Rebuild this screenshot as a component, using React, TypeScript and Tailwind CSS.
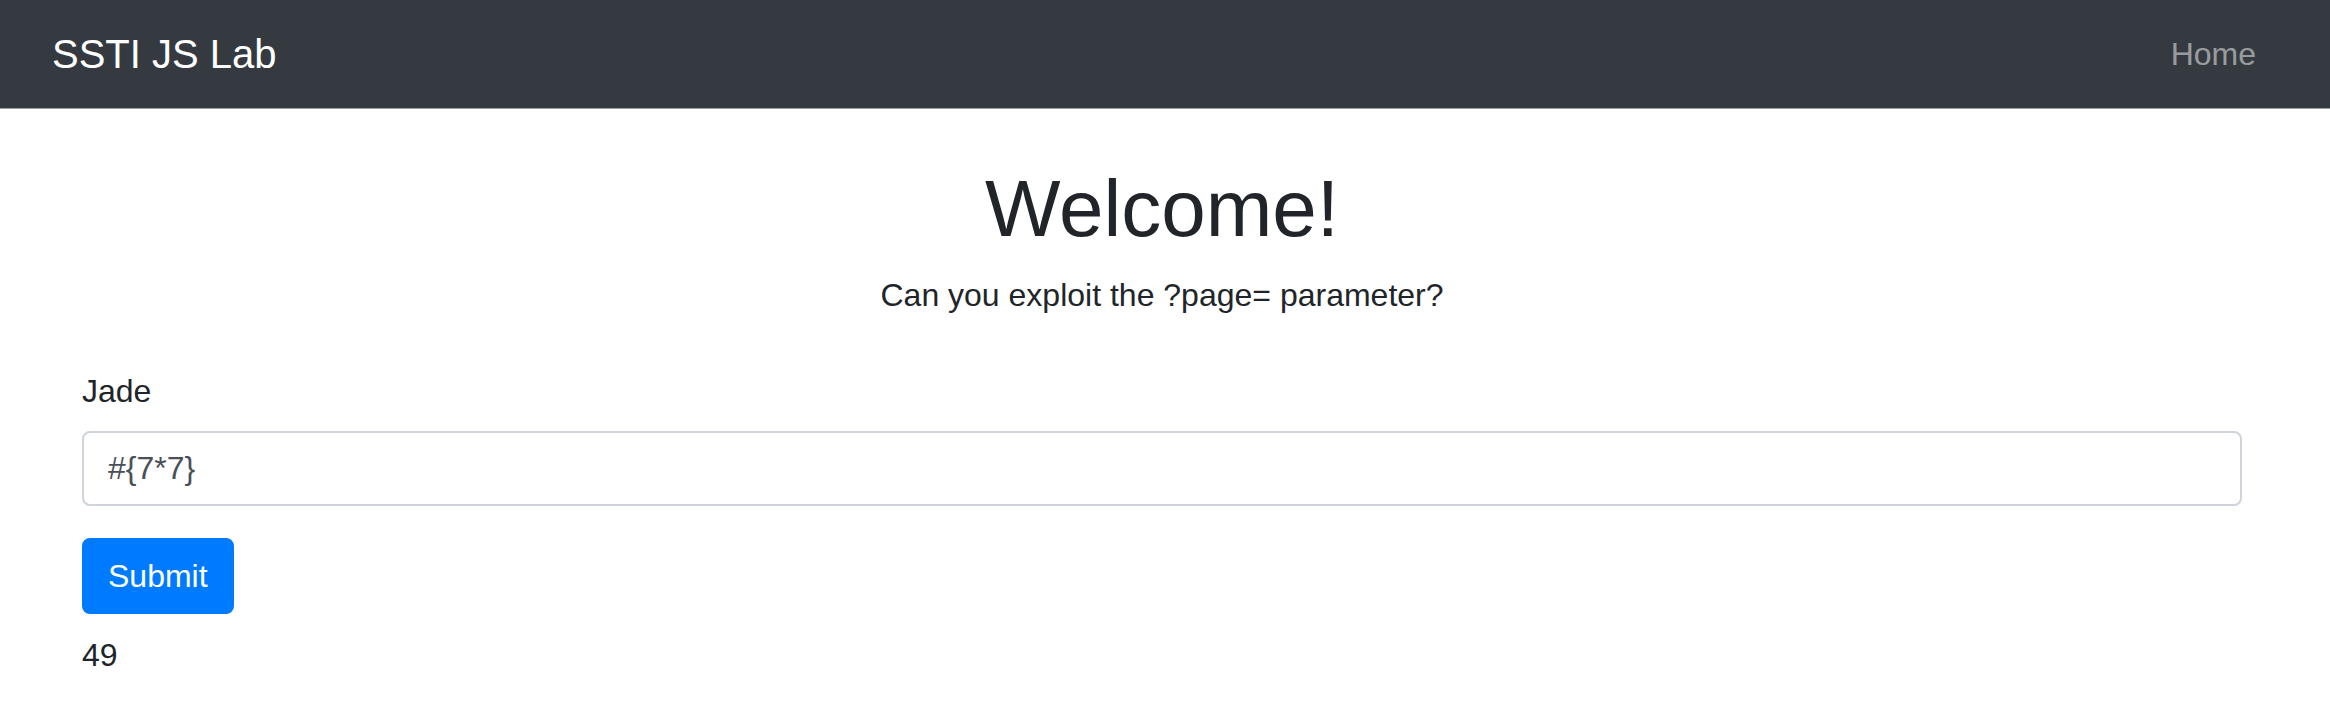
import React from "react";

export default function App() {
  return (
    <div
      className="min-h-[726px] bg-white text-[#212529]"
      style={{ fontFamily: '"Liberation Sans", Arial, sans-serif' }}
    >
      <nav className="flex h-[109px] items-center justify-between border-b border-[#9a9ea2] bg-[#343a40] pl-[52px] pr-[74px]">
        <span className="text-[40px] leading-[60px] text-white">SSTI JS Lab</span>
        <span className="text-[32px] leading-[48px] text-white/50">Home</span>
      </nav>
      <main className="pl-[82px] pr-[88px]">
        <h1 className="mt-[52px] text-center text-[80px] font-medium leading-[96px] text-[#212529]">
          Welcome!
        </h1>
        <p className="mt-[14px] text-center text-[32px] leading-[48px] text-[#212529]">
          Can you exploit the ?page= parameter?
        </p>
        <form className="mt-[48px]" onSubmit={(e) => e.preventDefault()}>
          <label className="block text-[32px] leading-[48px] text-[#212529]">Jade</label>
          <input
            type="text"
            defaultValue="#{7*7}"
            className="mt-[16px] block h-[75px] w-full rounded-[8px] border-2 border-[#ced4da] bg-white px-[24px] text-[32px] text-[#495057] outline-none"
          />
          <button
            type="submit"
            className="mt-[32px] h-[76px] rounded-[8px] border-2 border-[#007bff] bg-[#007bff] px-[24px] text-[32px] leading-[48px] text-white"
          >
            Submit
          </button>
        </form>
        <div className="mt-[17px] text-[32px] leading-[48px] text-[#212529]">49</div>
      </main>
    </div>
  );
}
